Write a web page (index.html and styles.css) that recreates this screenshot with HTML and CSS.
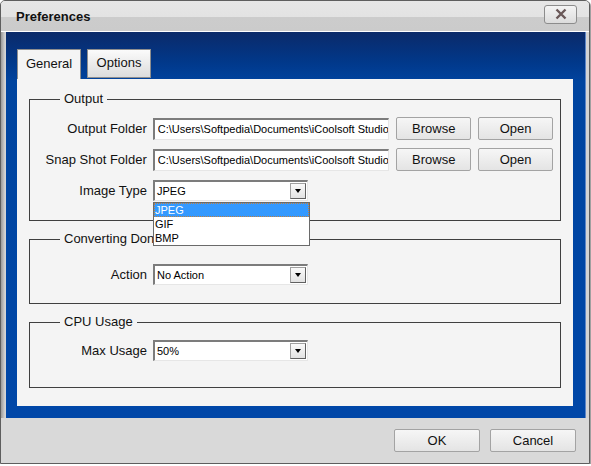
FILE: index.html
```html
<!DOCTYPE html>
<html lang="en">
<head>
  <meta charset="UTF-8">
  <title>Preferences</title>
  <link rel="stylesheet" href="styles.css">
</head>
<body>

    <!-- Dialog window -->
    <div class="window">

        <!-- Title bar -->
        <div class="titlebar">
            <span class="title">Preferences</span>
            <button class="close">
                <svg width="14" height="12" viewBox="0 0 14 12">
                    <path d="M2.5 1.5 L11.5 10.5 M11.5 1.5 L2.5 10.5" stroke="#6a5858" stroke-width="2.4"/>
                </svg>
            </button>
        </div>

        <!-- Blue area with tabs -->
        <div class="frame">
            <div class="blue">
                <div class="tabs">
                    <span class="tab active">General</span>
                    <span class="tab">Options</span>
                </div>

                <div class="panel">

                    <fieldset class="group group-output">
                        <legend>Output</legend>
                        <div class="row">
                            <label>Output Folder</label>
                            <div class="field"><span>C:\Users\Softpedia\Documents\iCoolsoft Studio\i</span></div>
                            <button class="btn">Browse</button>
                            <button class="btn">Open</button>
                        </div>
                        <div class="row">
                            <label>Snap Shot Folder</label>
                            <div class="field"><span>C:\Users\Softpedia\Documents\iCoolsoft Studio\S</span></div>
                            <button class="btn">Browse</button>
                            <button class="btn">Open</button>
                        </div>
                        <div class="row row-last">
                            <label>Image Type</label>
                            <div class="select">
                                <span class="value">JPEG</span>
                                <span class="arrow"></span>
                                <ul class="list">
                                    <li class="selected">JPEG</li>
                                    <li>GIF</li>
                                    <li>BMP</li>
                                </ul>
                            </div>
                        </div>
                    </fieldset>

                    <fieldset class="group group-done">
                        <legend>Converting Done</legend>
                        <div class="row">
                            <label>Action</label>
                            <div class="select">
                                <span class="value">No Action</span>
                                <span class="arrow"></span>
                            </div>
                        </div>
                    </fieldset>

                    <fieldset class="group group-cpu">
                        <legend>CPU Usage</legend>
                        <div class="row">
                            <label>Max Usage</label>
                            <div class="select">
                                <span class="value">50%</span>
                                <span class="arrow"></span>
                            </div>
                        </div>
                    </fieldset>

                </div>
            </div>
        </div>

        <!-- Bottom buttons -->
        <div class="footer">
            <button class="btn btn-dialog">OK</button>
            <button class="btn btn-dialog">Cancel</button>
        </div>

    </div>

</body>
</html>
```

FILE: styles.css
```css
body {
  margin: 0;
  font-family: "Liberation Sans", Arial, sans-serif;
  background-color: #ffffff;
}

/* Window frame */
.window {
  width: 590px;
  height: 464px;
  box-sizing: border-box;
  border: 1px solid #5e5e5e;
  border-radius: 5px 5px 0 0;
  background-color: #d9d9d9;
  box-shadow: 1px 1px 0 #a0a0a0;
  display: flex;
  flex-direction: column;
  overflow: hidden;
}

/* Title bar */
.titlebar {
  height: 30px;
  flex-shrink: 0;
  display: flex;
  align-items: center;
  justify-content: space-between;
  padding: 0 12px 0 15px;
  background: linear-gradient(#e6e6e6 0, #e3e3e3 16px, #cccccc 16px, #cbcbcb 100%);
  border-bottom: 1px solid #ffffff;
}

.title {
  font-size: 13px;
  font-weight: bold;
  color: #111;
  margin-top: 1px;
}

.close {
  width: 33px;
  height: 19px;
  margin-top: -4px;
  padding: 0;
  border: 1px solid #8c8c8c;
  border-radius: 3px;
  background: linear-gradient(#f4f4f4, #dcdcdc);
  display: flex;
  align-items: center;
  justify-content: center;
}

/* Blue area */
.frame {
  height: 386px;
  flex-shrink: 0;
  padding: 0 3px 0 5px;
  background: linear-gradient(90deg, #9a9a9a, #d4d4d4 4px);
}

.blue {
  height: 100%;
  box-sizing: border-box;
  padding: 17px 12px 12px 11px;
  background: linear-gradient(#0b2a69 0, #01388a 30px, #00449f 50px, #0047a8 100%);
  border-right: 1px solid #5d86c8;
  display: flex;
  flex-direction: column;
}

/* Tabs */
.tabs {
  display: flex;
  gap: 6px;
  height: 30px;
}

.tab {
  width: 64px;
  height: 29px;
  box-sizing: border-box;
  border: 1px solid #8e8e8e;
  background: linear-gradient(#fbfbfb, #dcdcdc);
  font-size: 13px;
  color: #111;
  display: flex;
  align-items: center;
  justify-content: center;
  padding-bottom: 2px;
}

.tab.active {
  height: 30px;
  border-bottom: none;
  background: #f4f4f4;
}

.panel {
  flex: 1;
  background-color: #f4f4f4;
  padding: 12px 12px 0 12px;
}

/* Group boxes */
.group {
  margin: 0 0 10px 0;
  border: 1px solid #404040;
  padding: 0;
  min-width: 0;
}

.group legend {
  margin-left: 30px;
  padding: 0 4px;
  font-size: 13px;
  line-height: 16px;
  color: #111;
}

.group-output {
  padding: 10px 0 18px 0;
}

.group-done {
  padding: 16px 0 17px 0;
}

.group-cpu {
  padding: 9px 0 25px 0;
}

.row {
  display: flex;
  align-items: center;
  height: 23px;
  margin-bottom: 8px;
}

.row:last-child {
  margin-bottom: 0;
}

.row-last {
  margin-top: 2px;
}

.row label {
  width: 117px;
  margin-right: 6px;
  text-align: right;
  font-size: 13px;
  color: #111;
}

/* Text fields */
.field {
  width: 237px;
  height: 22px;
  box-sizing: border-box;
  margin-right: 7px;
  padding: 0 0 0 3px;
  background-color: #fff;
  border-top: 2px solid #7c7c7c;
  border-left: 2px solid #7c7c7c;
  border-right: 1px solid #e6e6e6;
  border-bottom: 1px solid #e6e6e6;
  font-size: 11px;
  line-height: 19px;
  white-space: nowrap;
  overflow: hidden;
}

.field span {
  display: block;
  overflow: hidden;
}

/* Buttons */
.btn {
  width: 75px;
  height: 23px;
  margin-right: 7px;
  padding: 0;
  border: 1px solid #a3a3a3;
  border-radius: 2px;
  background: linear-gradient(#f6f6f6, #e4e4e4);
  font-family: "Liberation Sans", Arial, sans-serif;
  font-size: 13px;
  color: #111;
}

/* Combo boxes */
.select {
  position: relative;
  width: 155px;
  height: 21px;
  box-sizing: border-box;
  background-color: #fff;
  border-top: 2px solid #7c7c7c;
  border-left: 2px solid #7c7c7c;
  border-right: 1px solid #e6e6e6;
  border-bottom: 1px solid #e6e6e6;
  display: flex;
  align-items: center;
  justify-content: space-between;
}

.select .value {
  font-size: 11px;
  padding-left: 2px;
}

.select .arrow {
  width: 16px;
  height: 16px;
  box-sizing: border-box;
  margin-right: 1px;
  border: 1px solid #a0a0a0;
  border-right-color: #606060;
  border-bottom-color: #606060;
  background: linear-gradient(#fafafa, #e2e2e2);
  position: relative;
}

.select .arrow::after {
  content: "";
  position: absolute;
  left: 4px;
  top: 5px;
  border-left: 3.5px solid transparent;
  border-right: 3.5px solid transparent;
  border-top: 4px solid #000;
}

/* Open dropdown list */
.list {
  position: absolute;
  top: 20px;
  left: -2px;
  width: 157px;
  box-sizing: border-box;
  margin: 0;
  padding: 0;
  list-style: none;
  background-color: #fff;
  border: 1px solid #6a6a6a;
  z-index: 2;
}

.list li {
  height: 14px;
  line-height: 14px;
  font-size: 11px;
  padding-left: 1px;
  color: #000;
}

.list li.selected {
  background-color: #3399ff;
  color: #fff;
  outline: 1px dotted #c08040;
  outline-offset: -1px;
}

/* Dialog footer */
.footer {
  flex: 1;
  display: flex;
  justify-content: flex-end;
  align-items: flex-start;
  padding: 11px 13px 0 0;
  gap: 10px;
}

.btn-dialog {
  width: 86px;
  margin-right: 0;
}
```
